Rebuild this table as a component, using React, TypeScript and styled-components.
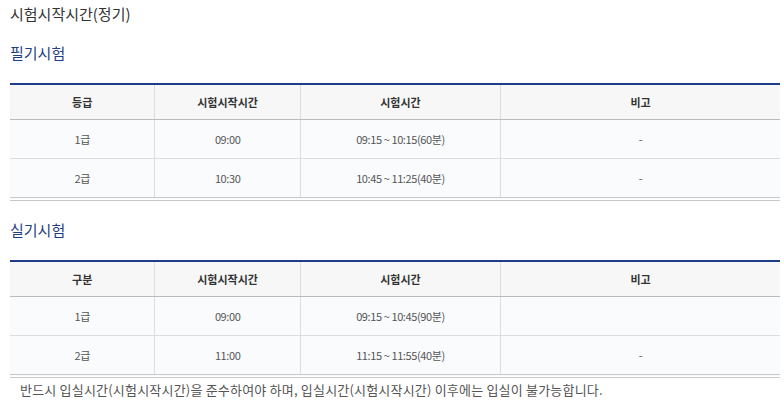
import React from 'react';
import styled, { createGlobalStyle } from 'styled-components';

type Row = {
  grade: string;
  start: string;
  time: string;
  note: string;
};

type Section = {
  title: string;
  firstHead: string;
  rows: Row[];
};

const sections: Section[] = [
  {
    title: '필기시험',
    firstHead: '등급',
    rows: [
      { grade: '1급', start: '09:00', time: '09:15 ~ 10:15(60분)', note: '-' },
      { grade: '2급', start: '10:30', time: '10:45 ~ 11:25(40분)', note: '-' },
    ],
  },
  {
    title: '실기시험',
    firstHead: '구분',
    rows: [
      { grade: '1급', start: '09:00', time: '09:15 ~ 10:45(90분)', note: '' },
      { grade: '2급', start: '11:00', time: '11:15 ~ 11:55(40분)', note: '-' },
    ],
  },
];

const GlobalStyle = createGlobalStyle`
  body {
    margin: 0;
    background: #ffffff;
    font-family: "Noto Sans CJK KR", "Noto Sans", sans-serif;
  }
`;

const Page = styled.div`
  width: 770px;
  padding: 4px 0 0 10px;
`;

const Title = styled.h3`
  margin: 0;
  font-size: 15px;
  line-height: 20px;
  font-weight: 400;
  color: #333333;
`;

const SectionTitle = styled.h4<{ $first?: boolean }>`
  margin: 19px 0 20px;
  font-size: 15px;
  line-height: 20px;
  font-weight: 400;
  color: #1f3f7f;
`;

const Table = styled.table`
  width: 100%;
  border-collapse: collapse;
  table-layout: fixed;
  border-top: 2px solid #1f3c88;
  border-bottom: 4px double #c8c8c8;
`;

const HeadCell = styled.th<{ $w: number }>`
  width: ${p => p.$w}%;
  height: 34px;
  padding: 0;
  background: #f7f7f7;
  border-bottom: 1px solid #bbbbbb;
  border-left: 1px solid #dddddd;
  font-size: 11px;
  font-weight: 700;
  color: #333333;
  &:first-child {
    border-left: 0;
  }
`;

const BodyRow = styled.tr`
  & + & td {
    border-top: 1px solid #dddddd;
  }
`;

const Cell = styled.td`
  height: 38px;
  padding: 0;
  text-align: center;
  background: #fafbfd;
  border-left: 1px solid #dddddd;
  font-size: 11px;
  color: #555555;
  letter-spacing: -0.4px;
  &:first-child {
    border-left: 0;
  }
`;

const Notice = styled.p`
  margin: 2px 0 0 10px;
  font-size: 13px;
  line-height: 20px;
  color: #555555;
  letter-spacing: 0.2px;
  white-space: nowrap;
`;

const widths = [18.83, 18.83, 25.97, 36.37];

const App: React.FC = () => {
  return (
    <>
      <GlobalStyle />
      <Page>
        <Title>시험시작시간(정기)</Title>
        {sections.map(section => (
          <React.Fragment key={section.title}>
            <SectionTitle>{section.title}</SectionTitle>
            <Table>
              <thead>
                <tr>
                  {[section.firstHead, '시험시작시간', '시험시간', '비고'].map((h, i) => (
                    <HeadCell key={h} $w={widths[i]}>
                      {h}
                    </HeadCell>
                  ))}
                </tr>
              </thead>
              <tbody>
                {section.rows.map(row => (
                  <BodyRow key={row.grade}>
                    <Cell>{row.grade}</Cell>
                    <Cell>{row.start}</Cell>
                    <Cell>{row.time}</Cell>
                    <Cell>{row.note}</Cell>
                  </BodyRow>
                ))}
              </tbody>
            </Table>
          </React.Fragment>
        ))}
        <Notice>반드시 입실시간(시험시작시간)을 준수하여야 하며, 입실시간(시험시작시간) 이후에는 입실이 불가능합니다.</Notice>
      </Page>
    </>
  );
};

export default App;
